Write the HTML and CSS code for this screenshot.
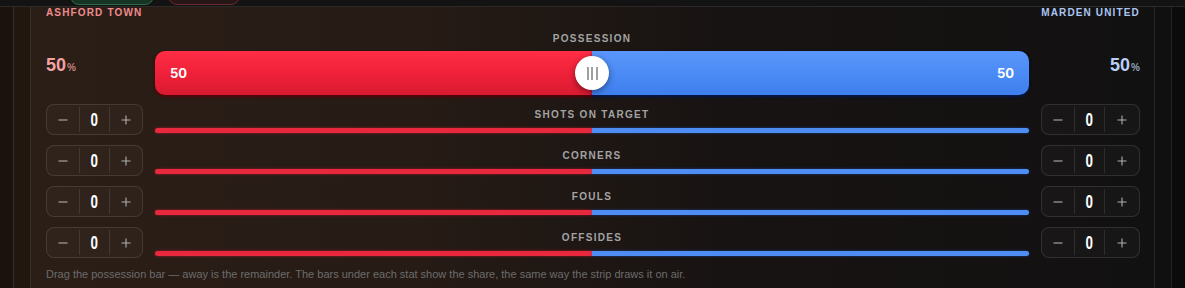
FILE: index.html
```html
<!DOCTYPE html>
<html lang="en">
<head>
<meta charset="utf-8">
<title>Match stats</title>
<link rel="stylesheet" href="styles.css">
</head>
<body>
<header class="topbar">
  <span class="pill pill-green"></span>
  <span class="pill pill-red"></span>
</header>
<div class="frame">
  <section class="panel">
    <div class="row names">
      <div class="team team-home">ASHFORD TOWN</div>
      <div></div>
      <div class="team team-away">MARDEN UNITED</div>
    </div>

    <div class="row poss-row">
      <div class="pct pct-home">50<span class="pct-sign">%</span></div>
      <div class="center">
        <div class="label">POSSESSION</div>
        <div class="poss-bar">
          <div class="poss-home" style="width:50%"><span>50</span></div>
          <div class="poss-away"><span>50</span></div>
          <div class="knob" style="left:50%"><i></i><i></i><i></i></div>
        </div>
      </div>
      <div class="pct pct-away">50<span class="pct-sign">%</span></div>
    </div>

    <div class="stats">
      <div class="row stat-row">
        <div class="stepper"><button class="sb"><svg viewBox="0 0 10 10"><path d="M0.5 5H9.5"/></svg></button><span class="val"><b>0</b></span><button class="sb"><svg viewBox="0 0 10 10"><path d="M0.5 5H9.5M5 0.5V9.5"/></svg></button></div>
        <div class="center"><div class="label">SHOTS ON TARGET</div><div class="share"><div class="sh-home" style="width:50%"></div><div class="sh-away"></div></div></div>
        <div class="stepper"><button class="sb"><svg viewBox="0 0 10 10"><path d="M0.5 5H9.5"/></svg></button><span class="val"><b>0</b></span><button class="sb"><svg viewBox="0 0 10 10"><path d="M0.5 5H9.5M5 0.5V9.5"/></svg></button></div>
      </div>
      <div class="row stat-row">
        <div class="stepper"><button class="sb"><svg viewBox="0 0 10 10"><path d="M0.5 5H9.5"/></svg></button><span class="val"><b>0</b></span><button class="sb"><svg viewBox="0 0 10 10"><path d="M0.5 5H9.5M5 0.5V9.5"/></svg></button></div>
        <div class="center"><div class="label">CORNERS</div><div class="share"><div class="sh-home" style="width:50%"></div><div class="sh-away"></div></div></div>
        <div class="stepper"><button class="sb"><svg viewBox="0 0 10 10"><path d="M0.5 5H9.5"/></svg></button><span class="val"><b>0</b></span><button class="sb"><svg viewBox="0 0 10 10"><path d="M0.5 5H9.5M5 0.5V9.5"/></svg></button></div>
      </div>
      <div class="row stat-row">
        <div class="stepper"><button class="sb"><svg viewBox="0 0 10 10"><path d="M0.5 5H9.5"/></svg></button><span class="val"><b>0</b></span><button class="sb"><svg viewBox="0 0 10 10"><path d="M0.5 5H9.5M5 0.5V9.5"/></svg></button></div>
        <div class="center"><div class="label">FOULS</div><div class="share"><div class="sh-home" style="width:50%"></div><div class="sh-away"></div></div></div>
        <div class="stepper"><button class="sb"><svg viewBox="0 0 10 10"><path d="M0.5 5H9.5"/></svg></button><span class="val"><b>0</b></span><button class="sb"><svg viewBox="0 0 10 10"><path d="M0.5 5H9.5M5 0.5V9.5"/></svg></button></div>
      </div>
      <div class="row stat-row">
        <div class="stepper"><button class="sb"><svg viewBox="0 0 10 10"><path d="M0.5 5H9.5"/></svg></button><span class="val"><b>0</b></span><button class="sb"><svg viewBox="0 0 10 10"><path d="M0.5 5H9.5M5 0.5V9.5"/></svg></button></div>
        <div class="center"><div class="label">OFFSIDES</div><div class="share"><div class="sh-home" style="width:50%"></div><div class="sh-away"></div></div></div>
        <div class="stepper"><button class="sb"><svg viewBox="0 0 10 10"><path d="M0.5 5H9.5"/></svg></button><span class="val"><b>0</b></span><button class="sb"><svg viewBox="0 0 10 10"><path d="M0.5 5H9.5M5 0.5V9.5"/></svg></button></div>
      </div>
    </div>

    <p class="hint">Drag the possession bar — away is the remainder. The bars under each stat show the share, the same way the strip draws it on air.</p>
  </section>
</div>
</body>
</html>
```

FILE: styles.css
```css
* { box-sizing: border-box; }

html, body {
  margin: 0;
  height: 100%;
}

body {
  background: linear-gradient(90deg, #1b120e 0%, #171210 45%, #0c0b0b 100%);
  font-family: "Liberation Sans", Arial, sans-serif;
  color: #ddd;
  overflow: hidden;
}

.topbar {
  height: 7px;
  display: flex;
  align-items: flex-end;
  overflow: hidden;
  background: #141313;
  border-bottom: 1px solid #2c2a29;
  padding-left: 70px;
  gap: 14px;
}

.pill {
  flex: none;
  height: 30px;
  margin-bottom: 1px;
  border-radius: 9px;
}
.pill-green {
  width: 84px;
  background: #173424;
  border: 1px solid #2d6a48;
}
.pill-red {
  width: 72px;
  background: #261616;
  border: 1px solid #6a2c31;
}

.frame {
  margin: 0 13px 0 13px;
  height: calc(100% - 7px);
  border-left: 1px solid #3a2c24;
  border-right: 1px solid #222;
  background: linear-gradient(90deg, #21170f 0%, #1c1512 40%, #101010 100%);
}

.panel {
  margin: 0 16px;
  height: 100%;
  border-left: 1px solid #3d2e26;
  border-right: 1px solid #262626;
  padding: 0 14px 0 15px;
  background: linear-gradient(90deg, #2b1e17 0%, #261b15 35%, #171312 62%, #121111 100%);
}

.row {
  display: grid;
  grid-template-columns: 97px 1fr 99px;
  column-gap: 12px;
}

.names { height: 11px; align-items: center; }

.team {
  font-size: 10px;
  line-height: 11px;
  font-weight: 700;
  letter-spacing: 1.15px;
  white-space: nowrap;
}
.team-home { color: #f08c8c; }
.team-away { color: #abc5f2; text-align: right; }

.poss-row { padding-top: 14px; }

.center {
  display: flex;
  flex-direction: column;
  align-items: stretch;
}

.label {
  text-align: center;
  font-size: 10px;
  line-height: 14px;
  font-weight: 700;
  letter-spacing: 1.3px;
  color: #a3a3a3;
}

.pct {
  padding-top: 23px;
  font-size: 18px;
  line-height: 20px;
  font-weight: 700;
}
.pct-home { color: #f2a2a2; }
.pct-away { color: #b9cff6; text-align: right; }
.pct-sign {
  font-size: 10px;
  font-weight: 700;
  margin-left: 1px;
  opacity: 0.75;
}

.poss-bar {
  position: relative;
  margin-top: 5px;
  height: 44px;
  display: flex;
  border-radius: 10px;
  box-shadow: 0 1px 3px rgba(0, 0, 0, 0.6);
}
.poss-home {
  display: flex;
  align-items: center;
  padding-left: 15px;
  background: linear-gradient(180deg, #ff2d45 0%, #f0213a 50%, #d81a30 100%);
  border-radius: 10px 0 0 10px;
  box-shadow: 0 2px 3px rgba(120, 0, 10, 0.7);
}
.poss-away {
  flex: 1;
  display: flex;
  align-items: center;
  justify-content: flex-end;
  padding-right: 15px;
  background: linear-gradient(180deg, #5a96fa 0%, #4b8bf5 50%, #3e7fee 100%);
  border-radius: 0 10px 10px 0;
  box-shadow: 0 2px 3px rgba(0, 30, 110, 0.7);
}
.poss-home span, .poss-away span {
  color: #fff;
  font-size: 13px;
  font-weight: 700;
  font-family: "Inter", "Liberation Sans", sans-serif;
}

.knob {
  position: absolute;
  top: 5px;
  width: 34px;
  height: 34px;
  margin-left: -17px;
  border-radius: 50%;
  background: #fff;
  box-shadow: 0 2px 6px rgba(0, 0, 0, 0.45);
  display: flex;
  align-items: center;
  justify-content: center;
  gap: 2.5px;
}
.knob i {
  display: block;
  width: 2px;
  height: 13px;
  background: #a0a0a0;
}

.stats {
  margin-top: 9px;
  display: flex;
  flex-direction: column;
  gap: 10px;
}

.stat-row { height: 31px; }
.stat-row .center { padding-top: 4px; }

.share {
  margin-top: 6px;
  height: 5px;
  display: flex;
  border-radius: 3px;
}
.sh-home {
  background: #e8283d;
  border-radius: 3px 0 0 3px;
  box-shadow: 0 0 3px rgba(230, 30, 50, 0.6);
}
.sh-away {
  flex: 1;
  background: #4e8ef4;
  border-radius: 0 3px 3px 0;
  box-shadow: 0 0 3px rgba(40, 100, 230, 0.5);
}

.stepper {
  height: 31px;
  display: grid;
  grid-template-columns: 32px 31px 1fr;
  align-items: center;
  border: 1px solid rgba(255, 255, 255, 0.11);
  border-radius: 8px;
  background: rgba(255, 255, 255, 0.025);
}

.sb {
  height: 100%;
  margin: 0;
  padding: 0;
  border: 0;
  background: transparent;
  display: flex;
  align-items: center;
  justify-content: center;
}
.sb svg {
  width: 10px;
  height: 10px;
  stroke: #b0b0b0;
  stroke-width: 1.1;
  fill: none;
}

.val {
  height: 25px;
  display: flex;
  align-items: center;
  justify-content: center;
  border-left: 1px solid rgba(255, 255, 255, 0.1);
  border-right: 1px solid rgba(255, 255, 255, 0.1);
}
.val b {
  display: inline-block;
  color: #fff;
  font-family: "Roboto", "Liberation Sans", sans-serif;
  font-weight: 700;
  font-size: 18px;
  line-height: 18px;
  transform: scaleX(0.72);
}

.hint {
  margin: 9px 0 0;
  font-size: 11px;
  line-height: 14px;
  color: #6c6c6c;
  white-space: nowrap;
}
```
